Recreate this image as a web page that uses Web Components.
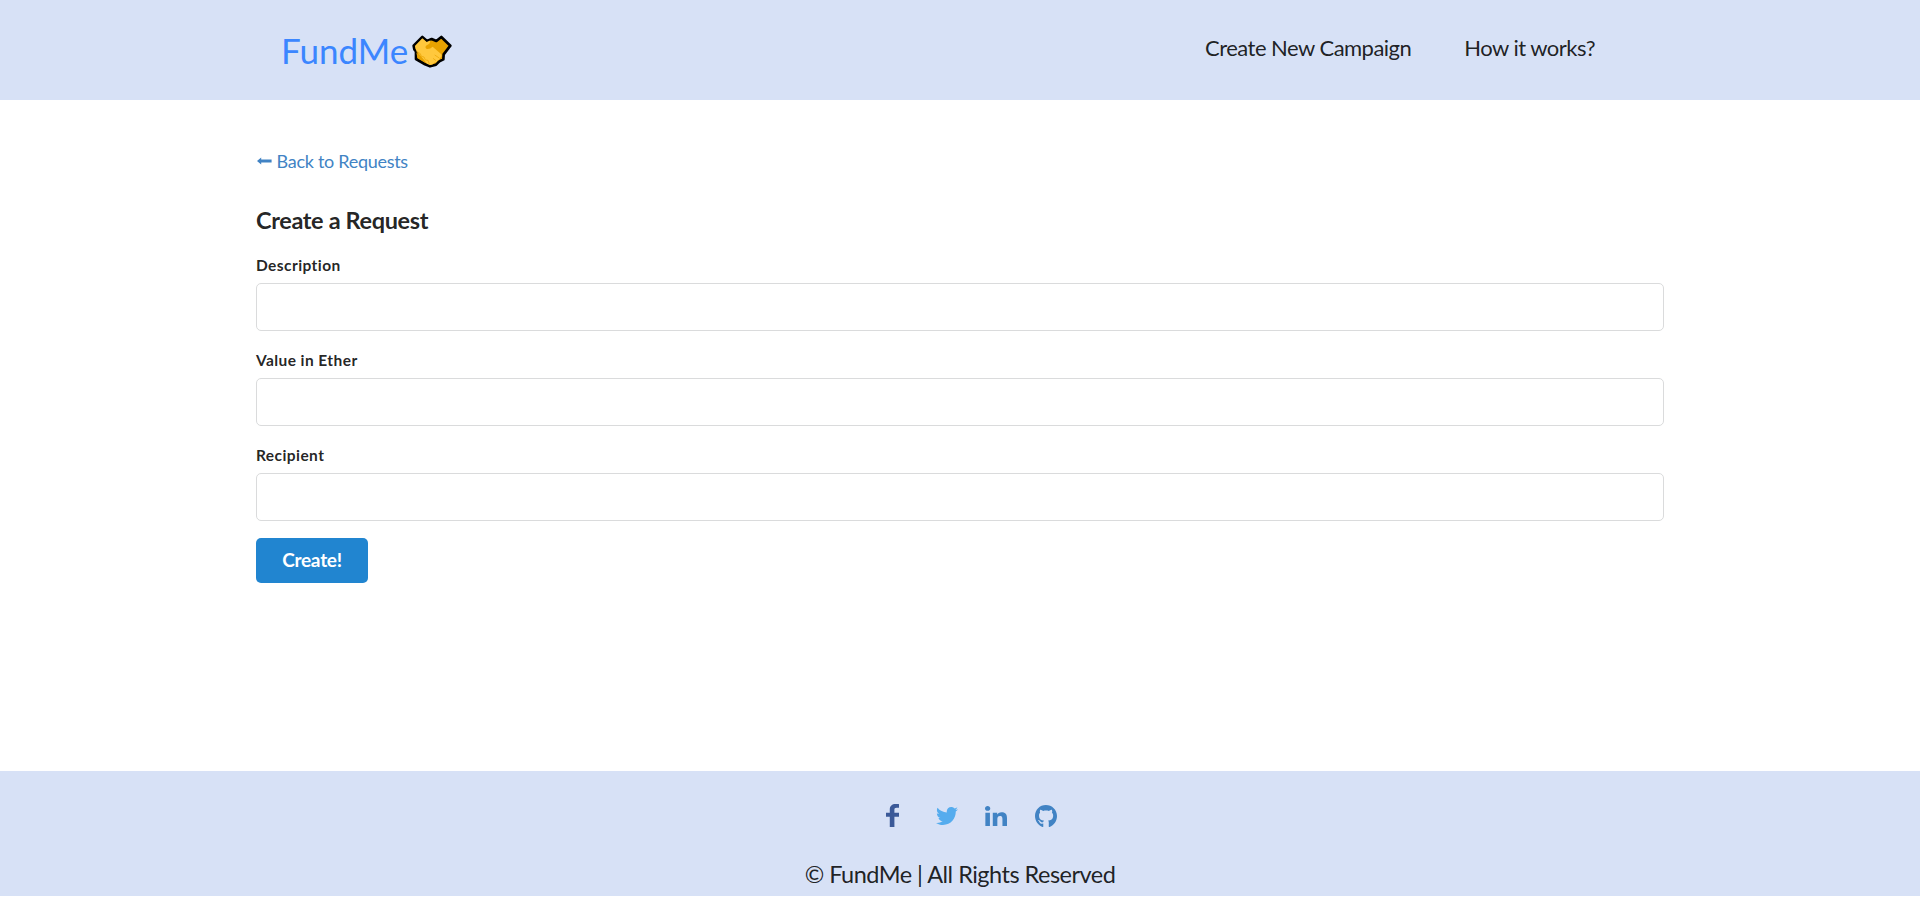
<!DOCTYPE html>
<html lang="en">
<head>
<meta charset="utf-8">
<title>FundMe</title>
<style>
html,body{margin:0;background:#fff}
body{font-family:Lato,"Liberation Sans",sans-serif;color:rgba(0,0,0,.87);font-size:18px;font-variant-ligatures:none}
</style>
</head>
<body>
<fund-app></fund-app>
<script>
const define = (name, html, setup) => {
  const t = document.createElement('template');
  t.innerHTML = html;
  customElements.define(name, class extends HTMLElement {
    constructor() {
      super();
      this.attachShadow({ mode: 'open' }).append(t.content.cloneNode(true));
    }
    connectedCallback() { if (setup) setup(this, this.shadowRoot); }
  });
};

const ICONS = {
  facebook: ['0 0 264 512', 'M76.7 512V283H0v-91h76.7v-71.7C76.7 42.4 124.3 0 193.8 0c33.3 0 61.9 2.5 70.2 3.6V85h-48.2c-37.8 0-45.1 18-45.1 44.3V192H264v91h-93.3v229z'],
  twitter: ['0 48 512 416', 'M459.37 151.716c.325 4.548.325 9.097.325 13.645 0 138.72-105.583 298.558-298.558 298.558-59.452 0-114.68-17.219-161.137-47.106 8.447.974 16.568 1.299 25.34 1.299 49.055 0 94.213-16.568 130.274-44.832-46.132-.975-84.792-31.188-98.112-72.772 6.498.974 12.995 1.624 19.818 1.624 9.421 0 18.843-1.3 27.614-3.573-48.081-9.747-84.143-51.98-84.143-102.985v-1.299c13.969 7.797 30.214 12.67 47.431 13.319-28.264-18.843-46.781-51.005-46.781-87.391 0-19.492 5.197-37.36 14.294-52.954 51.655 63.675 129.3 105.258 216.365 109.807-1.624-7.797-2.599-15.918-2.599-24.04 0-57.828 46.782-104.934 104.934-104.934 30.213 0 57.502 12.67 76.67 33.137 23.715-4.548 46.456-13.32 66.599-25.34-7.798 24.366-24.366 44.833-46.132 57.827 21.117-2.273 41.584-8.122 60.426-16.243-14.292 20.791-32.161 39.308-52.628 54.253z'],
  linkedin: ['0 32 448 448', 'M100.3 480H7.4V180.9h92.9V480zM53.8 140.1C24.1 140.1 0 115.5 0 85.8 0 56.1 24.1 32 53.8 32c29.7 0 53.8 24.1 53.8 53.8 0 29.7-24.1 54.3-53.8 54.3zM448 480h-92.7V334.4c0-34.7-.7-79.2-48.3-79.2-48.3 0-55.7 37.7-55.7 76.7V480h-92.8V180.9h89.1v40.8h1.3c12.4-23.5 42.7-48.3 87.9-48.3 94 0 111.3 61.9 111.3 142.3V480z'],
  github: ['0 8 496 484', 'M165.9 397.4c0 2-2.3 3.6-5.2 3.6-3.3.3-5.6-1.3-5.6-3.6 0-2 2.3-3.6 5.2-3.6 3-.3 5.6 1.3 5.6 3.6zM244.8 8C106.1 8 0 113.3 0 252c0 110.9 69.8 205.8 169.5 239.2 12.8 2.3 17.3-5.6 17.3-12.1 0-6.2-.3-40.4-.3-61.4 0 0-70 15-84.7-29.8 0 0-11.4-29.1-27.8-36.6 0 0-22.9-15.7 1.6-15.4 0 0 24.9 2 38.6 25.8 21.9 38.6 58.6 27.5 72.9 20.9 2.3-16 8.8-27.1 16-33.7-55.9-6.2-112.3-14.3-112.3-110.5 0-27.5 7.6-41.3 23.6-58.9-2.6-6.5-11.1-33.3 2.6-67.9 20.9-6.5 69 27 69 27 20-5.6 41.5-8.5 62.8-8.5s42.8 2.9 62.8 8.5c0 0 48.1-33.6 69-27 13.7 34.7 5.2 61.4 2.6 67.9 16 17.7 25.8 31.5 25.8 58.9 0 96.5-58.9 104.2-114.8 110.5 9.2 7.9 17 22.9 17 46.4 0 33.7-.3 75.4-.3 83.6 0 6.5 4.6 14.4 17.3 12.1C428.2 457.8 496 362.9 496 252 496 113.3 383.5 8 244.8 8z'],
  back: ['0 0 15 8', 'M0 4L4.2 .6V2.6H14.6V5.4H4.2V7.4z']
};

define('fund-icon', `<style>:host{display:block}svg{display:block;width:100%;height:100%;fill:currentColor}</style>
<svg preserveAspectRatio="none" aria-hidden="true"><path/></svg>`, (el, root) => {
  const [box, d] = ICONS[el.getAttribute('name')];
  root.querySelector('svg').setAttribute('viewBox', box);
  root.querySelector('path').setAttribute('d', d);
});

define('fund-handshake', `<style>:host{display:block;width:40px;height:33px}svg{display:block;width:100%;height:100%}</style>
<svg viewBox="518 105 120 99" aria-hidden="true">
<path d="M523 137L549 111L563 123L577 117L591 123L606 111L633 137L613 163L612 178L600 184L590 194L572 199L557 193L530 177V154L525 148Z" fill="#e8a200" stroke="#000" stroke-width="8" stroke-linejoin="round"/>
<path d="M527 138L549 115L562 126L574 121L570 131L560 137Q556 144 563 147Q572 148 580 140L606 163Q609 171 602 174Q601 181 594 182Q593 188 585 188Q580 195 572 195L563 191L530 151Z" fill="#ffc83d"/>
<path d="M531 157L534 173L560 189L553 179L545 172Z" fill="#e8a200"/>
<path d="M531 154L543 161L546 169L554 171L558 180L566 181L570 192M586 165L600 174M581 175L590 182" fill="none" stroke="#e8a200" stroke-width="2"/>
</svg>`);

define('fund-header', `<style>
:host{display:block;background:#d7e1f6;height:100px}
nav{box-sizing:border-box;width:1408px;height:100px;margin:0 auto;padding:0 69px 0 25px;display:flex;justify-content:space-between}
.logo{display:flex;gap:4px;color:#3b86ff;font-size:35px;line-height:44px;padding-top:28px;height:44px}
fund-handshake{margin-top:7px}
.links{display:flex;gap:53px;font-size:22px;letter-spacing:-.52px;line-height:28px;padding-top:34px;height:28px}
</style>
<nav><div class="logo"><span>FundMe</span><fund-handshake></fund-handshake></div>
<div class="links"><span>Create New Campaign</span><span>How it works?</span></div></nav>`);

define('fund-field', `<style>
:host{display:block;margin-bottom:19px}
label{display:block;font-size:15.5px;letter-spacing:.42px;line-height:20px;font-weight:700;margin-bottom:8px}
input{display:block;box-sizing:border-box;width:100%;height:48px;border:1px solid #dadbdc;border-radius:5px;background:#fff;outline:0;padding:0 16px;font:inherit}
</style><label for="f"><slot></slot></label><input id="f" type="text">`);

define('fund-form', `<style>
:host{display:block;width:1408px;margin:0 auto}
.back{display:flex;align-items:center;gap:4.5px;color:#4183c4;font-size:18px;letter-spacing:-.28px;line-height:24px;padding-top:49px}
fund-icon{width:15px;height:8px;margin-left:1px}
h3{margin:32px 0 20px;font-size:23.5px;letter-spacing:-.36px;line-height:30px;font-weight:700}
button{display:block;width:112px;height:45px;margin-top:-2px;border:0;border-radius:5px;background:#2185d0;color:#fff;font:700 19px/18px Lato,sans-serif;letter-spacing:-.25px;padding:0 0 1px}
</style>
<div class="back"><fund-icon name="back"></fund-icon><span>Back to Requests</span></div>
<h3>Create a Request</h3>
<fund-field>Description</fund-field><fund-field>Value in Ether</fund-field><fund-field>Recipient</fund-field>
<button>Create!</button>`);

define('fund-footer', `<style>
:host{display:block;box-sizing:border-box;height:125px;background:#d7e1f6;text-align:center}
.icons{display:flex;justify-content:center;align-items:center;height:90px;padding-left:23px}
.f{width:13px;height:23px;color:#3b5998;margin:0 37px 1px 0}
.t{width:22px;height:18px;color:#55acee;margin-right:27px}
.l{width:22px;height:20px;color:#4183c4;margin-right:28px}
.g{width:22px;height:22px;color:#4183c4}
p{margin:-1px 0 0;font-size:23.5px;letter-spacing:-.51px;line-height:28px}
</style>
<div class="icons"><fund-icon class="f" name="facebook"></fund-icon><fund-icon class="t" name="twitter"></fund-icon><fund-icon class="l" name="linkedin"></fund-icon><fund-icon class="g" name="github"></fund-icon></div>
<p>© FundMe | All Rights Reserved</p>`);

define('fund-app', `<style>:host{display:flex;flex-direction:column;height:896px}fund-form{flex:1}</style>
<fund-header></fund-header><fund-form></fund-form><fund-footer></fund-footer>`);
</script>
</body>
</html>
